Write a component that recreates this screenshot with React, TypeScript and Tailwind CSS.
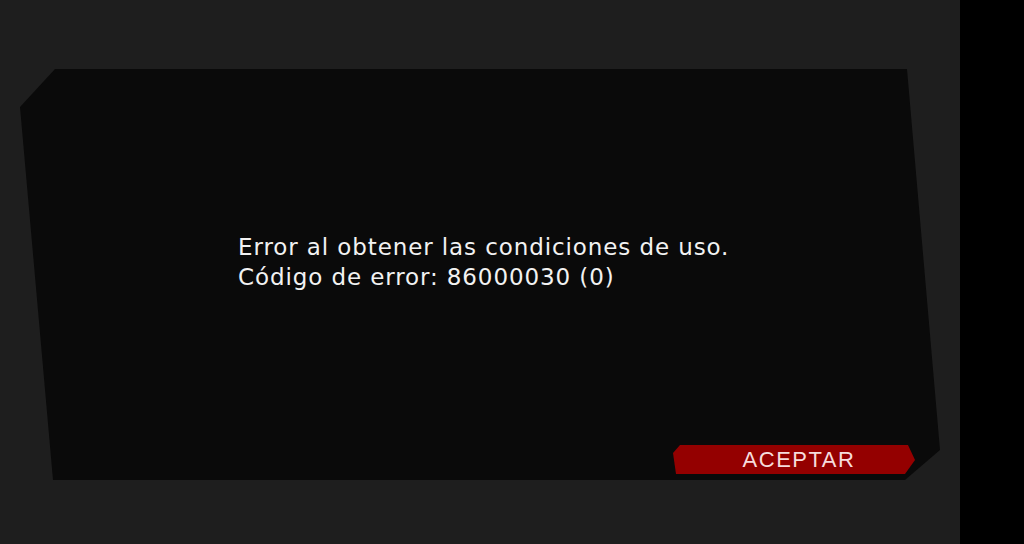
import React from 'react';

const panelShape =
  '[clip-path:polygon(35px_0,887px_0,920px_381px,885px_411px,33px_411px,0_38px)]';

export default function App() {
  return (
    <div className="flex w-[1024px] h-[544px] overflow-hidden bg-black">
      <div className="w-[960px] h-full bg-[#1e1e1e] pt-[69px] pl-[20px]">
        {/* 斜めにカットされたダイアログ */}
        <div className={`flex flex-col w-[920px] h-[411px] bg-[#0a0a0a] ${panelShape}`}>
          <div className="flex-1 pt-[163px] pl-[218px] text-[23px] leading-[30px] text-[#f2f2f2] font-['DejaVu_Sans',sans-serif] tracking-[0.9px]">
            <p>Error al obtener las condiciones de uso.</p>
            <p>Código de error: 86000030 (0)</p>
          </div>
          <div className="flex justify-end pr-[25px] pb-[6px]">
            <button className="w-[242px] h-[29px] pl-[10px] bg-[#940000] text-[#f6dcdc] text-[22px] leading-[29px] tracking-[1.5px] font-['Liberation_Sans',Arial,sans-serif] [clip-path:polygon(7px_0,235px_0,242px_15px,232px_29px,3px_29px,0_8px)]">
              ACEPTAR
            </button>
          </div>
        </div>
      </div>
      <div className="w-[64px] h-full bg-black" />
    </div>
  );
}
